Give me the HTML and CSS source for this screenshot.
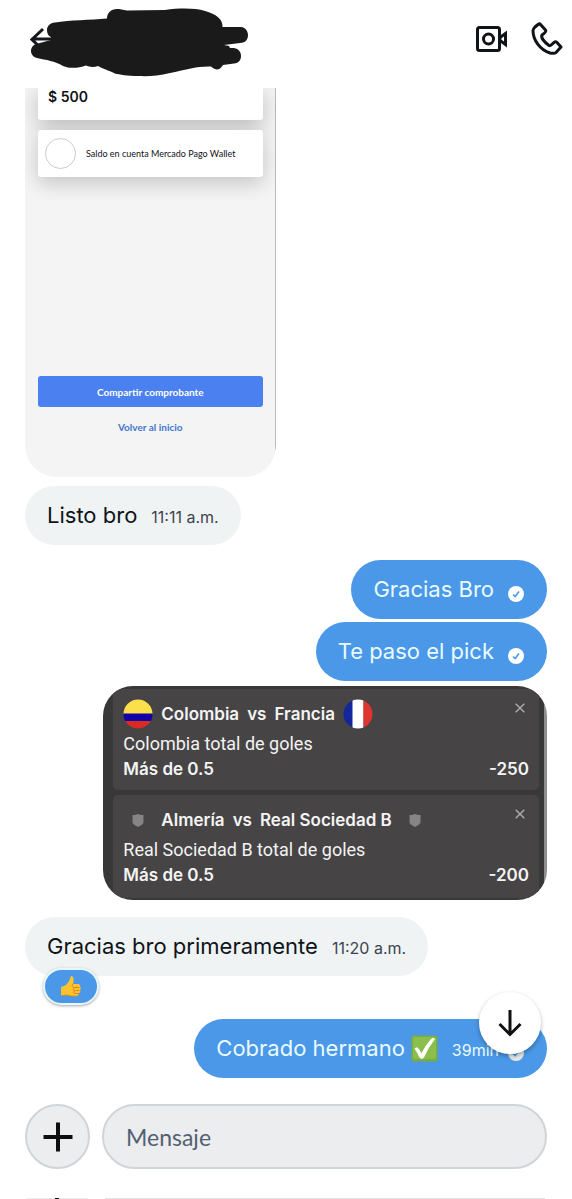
FILE: index.html
```html
<!DOCTYPE html>
<html lang="es">
<head>
<meta charset="utf-8">
<meta name="viewport" content="width=device-width, initial-scale=1">
<title>Mensajes</title>
<link rel="stylesheet" href="styles.css">
</head>
<body>
<div class="app">
  <header class="topbar">
    <button class="icon-btn back" type="button" aria-label="Volver">
      <svg width="220" height="70" viewBox="30 8 220 70" aria-hidden="true">
        <path d="M52 39H33M43 29L32 39.500L43 50" fill="none" stroke="#15181c" stroke-width="3"/>
        <path fill="#1a1a1a" d="M55 22.500C70 20 90 20 107 18.500C107 13 111 9 117 9C122 9 124 10.500 128 10.500L165 10C180 8 195 8 205 11C216 14 223 19 222.500 27L241 27C245 27 248 31 248 35C248 39 246 43 240 43L224 45L229 46L230 48L234 48C239 49 241 52 241 56C241 60 239 63 234 63.500L223 65C221 68 219 69.500 217 69.500C214 69.500 212 67 211 66.500C197 66 185 70 170 73C158 76 148 76.500 138 76C128 76 119 74.500 115 73.500C108 70 103 69 98 66C94 67.500 89 67 86 65.500C79 68 70 69 63 66C55 61 46 60 37 58C33 57 31 54 31 51C31 47 34 44 38 43.500L51 40L51 37C48 36 47 33 47 30C47 26 50 23 55 22.500Z"/>
      </svg>
    </button>
    <nav class="actions" aria-label="Llamadas">
      <button class="icon-btn" type="button" aria-label="Videollamada">
        <svg width="32" height="26" viewBox="0 0 32 26" fill="none" stroke="#0f1419" stroke-width="3" aria-hidden="true">
          <rect x="2.500" y="1.500" width="22" height="23" rx="2"/><circle cx="13.500" cy="13" r="5"/><path d="M25 11.500L30.500 7.500V18.500L25 14.500Z"/>
        </svg>
      </button>
      <button class="icon-btn" type="button" aria-label="Llamar">
        <svg width="32" height="34" viewBox="0 0 32 34" fill="none" stroke="#0f1419" stroke-width="3" stroke-linejoin="round" aria-hidden="true">
          <path d="M9.500 2.500L14.500 8C15.500 9.500 14 11 11 13C10 15 12 19 18 23.500C20 24.500 21 22 23 20.500C24 19.500 25 19.500 26 20.500L30 25L25 30.500C24 31.500 22 31.500 19 31C9 28 2 18 2 8.500C2 7 3 6 4 5L7 2.500C8 1.800 9 1.800 9.500 2.500Z"/>
        </svg>
      </button>
    </nav>
  </header>

  <main class="thread">
    <section class="receipt">
      <div class="amount">$ 500</div>
      <div class="wallet"><span class="ring"></span><span>Saldo en cuenta Mercado Pago Wallet</span></div>
      <div class="receipt-actions">
        <button class="share" type="button">Compartir comprobante</button>
        <a class="home" href="#">Volver al inicio</a>
      </div>
    </section>

    <div class="bubble in first"><span>Listo bro</span><time>11:11 a.m.</time></div>

    <div class="bubble out after-in"><span>Gracias Bro</span>
      <svg class="sent" width="16" height="16" viewBox="0 0 16 16" aria-hidden="true"><circle cx="8" cy="8" r="8" fill="#fff"/><path d="M5 8.500L7.200 10.500L11 5.500" fill="none" stroke="#4a98e7" stroke-width="1.600"/></svg>
    </div>
    <div class="bubble out again"><span>Te paso el pick</span>
      <svg class="sent" width="16" height="16" viewBox="0 0 16 16" aria-hidden="true"><circle cx="8" cy="8" r="8" fill="#fff"/><path d="M5 8.500L7.200 10.500L11 5.500" fill="none" stroke="#4a98e7" stroke-width="1.600"/></svg>
    </div>

    <section class="slip">
      <article class="bet">
        <div class="match">
          <svg class="crest" width="30" height="30" viewBox="0 0 30 30" role="img" aria-label="Colombia"><clipPath id="co"><circle cx="15" cy="15" r="14.500"/></clipPath><g clip-path="url(#co)"><path fill="#fbe04b" d="M0 0H30V15H0Z"/><path fill="#1200a8" d="M0 14.500H30V22H0Z"/><path fill="#d92b22" d="M0 22H30V30H0Z"/></g></svg>
          <b>Colombia</b><b>vs</b><b>Francia</b>
          <svg class="crest" width="30" height="30" viewBox="0 0 30 30" role="img" aria-label="Francia"><clipPath id="fr"><circle cx="15" cy="15" r="14.500"/></clipPath><g clip-path="url(#fr)"><path fill="#14269c" d="M0 0H10V30H0Z"/><path fill="#fff" d="M9.500 0H20.500V30H9.500Z"/><path fill="#df3530" d="M20.500 0H30V30H20.500Z"/></g></svg>
          <button class="close" type="button" aria-label="Quitar"><svg width="10" height="10" viewBox="0 0 10 10" aria-hidden="true"><path d="M.7 .7L9.300 9.300M9.300 .7L.7 9.300" stroke="#aaa" stroke-width="1.500"/></svg></button>
        </div>
        <div class="market">Colombia total de goles</div>
        <div class="pick"><b>Más de 0.5</b><b>-250</b></div>
      </article>
      <article class="bet">
        <div class="match">
          <svg class="crest" width="30" height="30" viewBox="0 0 30 30" aria-hidden="true"><path fill="#858585" d="M9.500 10C12 10 14 9.500 15 9C16 9.500 18 10 20.500 10V17C20.500 19 18 20.500 15 22C12 20.500 9.500 19 9.500 17Z"/></svg>
          <b>Almería</b><b>vs</b><b>Real Sociedad B</b>
          <svg class="crest" width="30" height="30" viewBox="0 0 30 30" aria-hidden="true"><path fill="#858585" d="M9.500 10C12 10 14 9.500 15 9C16 9.500 18 10 20.500 10V17C20.500 19 18 20.500 15 22C12 20.500 9.500 19 9.500 17Z"/></svg>
          <button class="close" type="button" aria-label="Quitar"><svg width="10" height="10" viewBox="0 0 10 10" aria-hidden="true"><path d="M.7 .7L9.300 9.300M9.300 .7L.7 9.300" stroke="#aaa" stroke-width="1.500"/></svg></button>
        </div>
        <div class="market">Real Sociedad B total de goles</div>
        <div class="pick"><b>Más de 0.5</b><b>-200</b></div>
      </article>
    </section>

    <div class="bubble in after-slip"><span>Gracias bro primeramente</span><time>11:20 a.m.</time>
      <button class="reaction" type="button" aria-label="Me gusta">
        <svg width="20" height="21" viewBox="0 0 20 21" aria-hidden="true"><path fill="#fcc32f" d="M0 11Q3 10 5 9Q9 5 9.500 1Q10 -.5 11.500 .5Q13.500 2 12 8H17.500Q19.500 8.500 19 10.500Q20.500 12 19 14Q20 16 18.200 17Q18 19.500 16 20Q10 21 5.500 19L0 19.500Z"/><path fill="none" stroke="#d98c1c" stroke-width="1" d="M12 8Q10 11 13 11.500H18.500M13 11.500Q11 14 13.500 14.500H18.500M13.500 14.500Q11.500 17 14 17.500H18M1 19.500L6 19Q10 20.500 15 20"/></svg>
      </button>
    </div>

    <div class="bubble out last"><span>Cobrado hermano</span>
      <svg class="emoji" width="27" height="27" viewBox="0 0 27 27" role="img" aria-label="Hecho"><rect x=".5" y=".5" width="26" height="26" rx="2" fill="#79ae3d"/><rect x="2" y="2" width="23" height="22" rx="2" fill="#8abf4c"/><path d="M4 13.500Q6.500 12 7.500 14Q9 17 10.500 19Q15 10 20.500 4Q22 2.500 23.500 4Q17 12 12.500 22.500Q11 24.500 9 22.500Q7 18 4 13.500Z" fill="#fff" stroke="#fff"/></svg>
      <time>39min</time>
      <svg class="sent faded" width="16" height="16" viewBox="0 0 16 16" aria-hidden="true"><circle cx="8" cy="8" r="8" fill="#e4e6e8"/><path d="M5 8.500L7.200 10.500L11 5.500" fill="none" stroke="#4a98e7" stroke-width="1.600"/></svg>
      <button class="jump" type="button" aria-label="Ir al último mensaje">
        <svg width="24" height="28" viewBox="0 0 24 28" fill="none" stroke="#0f1012" stroke-width="3" aria-hidden="true"><path d="M12 1V25M1.500 15L12 25.500L22.500 15"/></svg>
      </button>
    </div>
  </main>

  <footer class="dock">
    <form class="composer">
      <button class="add" type="button" aria-label="Adjuntar"><svg width="30" height="30" viewBox="0 0 30 30" aria-hidden="true"><path d="M15 .5V29.500M.5 15H29.500" stroke="#0d0e10" stroke-width="4"/></svg></button>
      <input class="field" type="text" placeholder="Mensaje" aria-label="Mensaje">
    </form>
    <div class="peek" aria-hidden="true"><span class="peek-add"></span><span class="peek-field"></span></div>
  </footer>
</div>
</body>
</html>
```
FILE: styles.css
```css
* { box-sizing: border-box; }
body { margin: 0; background: #fff; color: #0f1419; font-family: Inter, "Noto Sans", sans-serif; }
button { border: 0; padding: 0; background: none; font: inherit; color: inherit; cursor: pointer; }
svg { display: block; flex: none; }
.app { display: flex; flex-direction: column; min-height: 100vh; overflow: hidden; }

.topbar { display: flex; align-items: flex-start; justify-content: space-between; height: 88px; padding: 8px 9px 0 30px; }
.actions { display: flex; align-items: center; gap: 24px; padding-top: 14px; }

.thread { display: flex; flex-direction: column; align-items: flex-start; padding: 0 25px; }

.receipt { width: 48%; padding: 0 13px 42px; background: linear-gradient(#bbb, #bbb) right top / 1px 362px no-repeat #f4f4f4; border-radius: 0 0 32px 32px; overflow: hidden; }
.amount { height: 32px; padding-left: 10px; background: #fff; border-radius: 0 0 3px 3px; box-shadow: 0 6px 22px rgba(0,0,0,.24); font: 600 14px/17px Inter, sans-serif; }
.wallet { position: relative; display: flex; align-items: center; gap: 10px; height: 47px; margin-top: 10px; padding-left: 7px; background: #fff; border-radius: 3px; box-shadow: 0 6px 20px rgba(0,0,0,.2); font: 9px Lato, sans-serif; white-space: nowrap; }
.ring { flex: none; width: 31px; height: 31px; border: 1px solid #ccc; border-radius: 50%; }
.receipt-actions { display: flex; flex-direction: column; align-items: center; gap: 13px; padding-top: 199px; }
.share { align-self: stretch; height: 31px; border-radius: 3px; background: #4a80ef; color: #fff; font: 700 10px Lato, sans-serif; }
.home { color: #4278cd; font: 700 10px/15px Lato, sans-serif; text-decoration: none; }

.bubble { position: relative; display: flex; align-items: baseline; height: 59px; padding: 0 22px; border-radius: 30px; font-size: 22px; line-height: 58px; white-space: nowrap; }
.bubble time { margin-left: 14px; font-size: 16px; }
.in { background: #eff3f4; }
.in time { color: #3c444d; }
.out { align-self: flex-end; background: #4a98e7; color: #e9fbff; }
.first { margin-top: 9px; }
.after-in { margin-top: 15px; }
.again { margin-top: 3px; }
.after-slip { margin-top: 17px; }
.last { margin-top: 43px; }
.sent { align-self: center; margin: 8px 1px 0 14px; }
.emoji { align-self: center; margin-left: 6px; }
.faded { margin-left: 9px; }

.reaction { position: absolute; left: 18px; bottom: -29px; display: flex; align-items: center; justify-content: center; width: 56px; height: 37px; border: 2px solid #e6f8ff; border-radius: 19px; background: #4a98e7; box-shadow: 0 1px 3px rgba(0,0,0,.35); }
.jump { position: absolute; right: 6px; top: -27px; display: flex; align-items: center; justify-content: center; width: 62px; height: 62px; border-radius: 50%; background: #fff; box-shadow: 0 2px 4px rgba(0,0,0,.3); }

.slip { align-self: flex-end; display: flex; flex-direction: column; gap: 5px; width: 85%; height: 214px; margin-top: 5px; padding: 3px 8px 0 10px; background: linear-gradient(#8e8e8e, #8e8e8e) right top / 3px 100% no-repeat #373837; border-radius: 30px; overflow: hidden; color: #f4f4f4; font: 17px/25px Inter, sans-serif; }
.bet { height: 101px; padding: 10px; background: #464445; border-radius: 5px; }
.bet + .bet { height: 103px; }
.bet b { font-weight: 600; }
.match { display: flex; align-items: center; gap: 8px; height: 30px; white-space: nowrap; }
.close { align-self: flex-start; margin: 4px 4px 0 auto; }
.market { font: 18px/30px Roboto, sans-serif; }
.pick { display: flex; justify-content: space-between; line-height: 21px; }

.dock { padding: 26px 25px 0; }
.composer { display: flex; gap: 12px; }
.add { display: flex; align-items: center; justify-content: center; width: 65px; height: 65px; border: 2px solid #ced5d9; border-radius: 50%; background: #ebedef; }
.field { flex: 1; min-width: 0; height: 65px; padding: 0 22px; border: 2px solid #ced5d9; border-radius: 33px; background: #ebedef; font: 23px Lato, sans-serif; color: #0f1419; outline: 0; }
.field::placeholder { color: #536071; opacity: 1; }
.peek { display: flex; gap: 17px; height: 2px; margin-top: 29px; padding: 0 2px; }
.peek-add { width: 61px; background: linear-gradient(90deg, #ebedef 28px, #0d0e10 28px, #0d0e10 32px, #ebedef 32px); }
.peek-field { flex: 1; background: #e2e3e4; }
```
